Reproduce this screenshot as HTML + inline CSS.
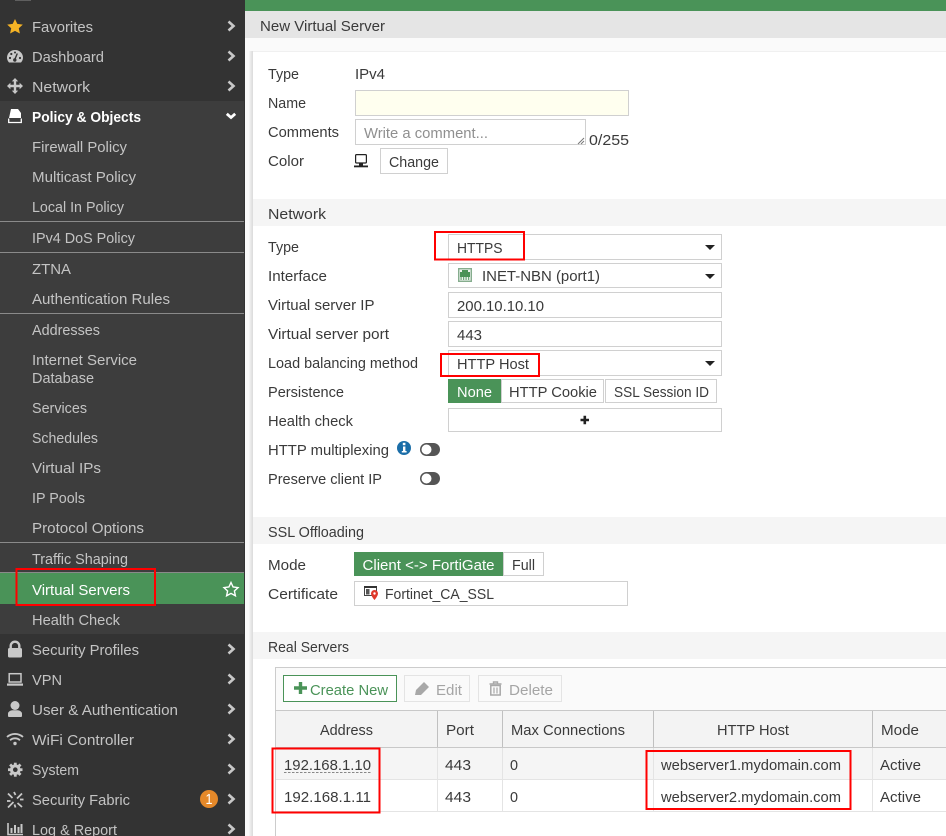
<!DOCTYPE html>
<html><head><meta charset="utf-8"><title>New Virtual Server</title>
<style>
html,body{margin:0;padding:0;width:946px;height:836px;overflow:hidden;background:#fff}
svg{display:block}
text{font-family:"Liberation Sans",sans-serif;font-size:15px;fill:#3a3a3a}
.s{fill:#c4c4c4}
.w{fill:#fff}
.b{font-weight:bold;fill:#fff}
.bx{fill:#fff;stroke:#d0d0d0;stroke-width:1}
.r{fill:none;stroke:#f00;stroke-width:2}
.ch{fill:none;stroke:#c8c8c8;stroke-width:2.6}
.ic{fill:#c8c8c8}
</style></head><body>
<svg xmlns="http://www.w3.org/2000/svg" width="946" height="836" viewBox="0 0 946 836">
<!-- main bg -->
<rect x="245" y="0" width="701" height="836" fill="#fafafa"/>
<rect x="245" y="0" width="701" height="11" fill="#4a9358"/>
<rect x="245" y="11" width="701" height="27" fill="#e5e5e5"/>
<text x="260" y="31" textLength="125" lengthAdjust="spacingAndGlyphs">New Virtual Server</text>
<rect x="249" y="51" width="697" height="1" fill="#f0f0f0"/>
<rect x="249" y="51" width="1" height="785" fill="#f3f3f3"/>
<rect x="250" y="51" width="1" height="785" fill="#ebebeb"/>
<rect x="251" y="51" width="1" height="785" fill="#e4e4e4"/>
<rect x="252" y="51" width="1" height="785" fill="#dedede"/>
<rect x="253" y="52" width="693" height="784" fill="#fff"/>

<!-- sidebar -->
<rect x="0" y="0" width="245" height="836" fill="#333"/>
<rect x="0" y="101" width="244" height="533" fill="#3d3d3d"/>
<rect x="0" y="573" width="244" height="31" fill="#4a9358"/>
<g fill="#8a8a8a">
<rect x="0" y="221" width="244" height="1"/><rect x="0" y="252" width="244" height="1"/>
<rect x="0" y="313" width="244" height="1"/><rect x="0" y="542" width="244" height="1"/>
<rect x="0" y="572" width="244" height="1"/>
</g>
<rect x="15" y="0" width="16" height="1" fill="#5f5f5f"/>
<text class="s" x="32" y="32" textLength="61" lengthAdjust="spacingAndGlyphs">Favorites</text>
<text class="s" x="32" y="62" textLength="72" lengthAdjust="spacingAndGlyphs">Dashboard</text>
<text class="s" x="32" y="92" textLength="58" lengthAdjust="spacingAndGlyphs">Network</text>
<text class="b" x="32" y="122" textLength="109" lengthAdjust="spacingAndGlyphs">Policy &amp; Objects</text>
<text class="s" x="32" y="152" textLength="95" lengthAdjust="spacingAndGlyphs">Firewall Policy</text>
<text class="s" x="32" y="182" textLength="104" lengthAdjust="spacingAndGlyphs">Multicast Policy</text>
<text class="s" x="32" y="212" textLength="92" lengthAdjust="spacingAndGlyphs">Local In Policy</text>
<text class="s" x="32" y="243" textLength="103" lengthAdjust="spacingAndGlyphs">IPv4 DoS Policy</text>
<text class="s" x="32" y="274" textLength="39" lengthAdjust="spacingAndGlyphs">ZTNA</text>
<text class="s" x="32" y="304" textLength="138" lengthAdjust="spacingAndGlyphs">Authentication Rules</text>
<text class="s" x="32" y="335" textLength="68" lengthAdjust="spacingAndGlyphs">Addresses</text>
<text class="s" x="32" y="365" textLength="105" lengthAdjust="spacingAndGlyphs">Internet Service</text>
<text class="s" x="32" y="383" textLength="62" lengthAdjust="spacingAndGlyphs">Database</text>
<text class="s" x="32" y="413" textLength="55" lengthAdjust="spacingAndGlyphs">Services</text>
<text class="s" x="32" y="443" textLength="66" lengthAdjust="spacingAndGlyphs">Schedules</text>
<text class="s" x="32" y="473" textLength="69" lengthAdjust="spacingAndGlyphs">Virtual IPs</text>
<text class="s" x="32" y="503" textLength="53" lengthAdjust="spacingAndGlyphs">IP Pools</text>
<text class="s" x="32" y="533" textLength="112" lengthAdjust="spacingAndGlyphs">Protocol Options</text>
<text class="s" x="32" y="564" textLength="96" lengthAdjust="spacingAndGlyphs">Traffic Shaping</text>
<text class="w" x="32" y="595" textLength="98" lengthAdjust="spacingAndGlyphs">Virtual Servers</text>
<text class="s" x="32" y="625" textLength="88" lengthAdjust="spacingAndGlyphs">Health Check</text>
<text class="s" x="32" y="655" textLength="107" lengthAdjust="spacingAndGlyphs">Security Profiles</text>
<text class="s" x="32" y="685" textLength="30" lengthAdjust="spacingAndGlyphs">VPN</text>
<text class="s" x="32" y="715" textLength="146" lengthAdjust="spacingAndGlyphs">User &amp; Authentication</text>
<text class="s" x="32" y="745" textLength="102" lengthAdjust="spacingAndGlyphs">WiFi Controller</text>
<text class="s" x="32" y="775" textLength="47" lengthAdjust="spacingAndGlyphs">System</text>
<text class="s" x="32" y="805" textLength="98" lengthAdjust="spacingAndGlyphs">Security Fabric</text>
<text class="s" x="32" y="835" textLength="85" lengthAdjust="spacingAndGlyphs">Log &amp; Report</text>

<!-- chevrons -->
<g class="ch">
<path d="M228.500 21.500l5 4.500-5 4.500"/><path d="M228.500 51.500l5 4.500-5 4.500"/><path d="M228.500 81.500l5 4.500-5 4.500"/>
<path d="M228.500 644.500l5 4.500-5 4.500"/><path d="M228.500 674.500l5 4.500-5 4.500"/><path d="M228.500 704.500l5 4.500-5 4.500"/>
<path d="M228.500 734.500l5 4.500-5 4.500"/><path d="M228.500 764.500l5 4.500-5 4.500"/><path d="M228.500 794.500l5 4.500-5 4.500"/><path d="M228.500 824.500l5 4.500-5 4.500"/>
</g>
<path d="M226.800 113.800l4.200 3.700 4.200-3.700" fill="none" stroke="#fff" stroke-width="2.800"/>

<!-- sidebar icons -->
<polygon points="15,19 17.300,23.900 22.800,24.600 18.800,28.300 19.900,33.500 15,30.900 10.100,33.500 11.200,28.300 7.200,24.600 12.700,23.900" fill="#f5b325"/>
<path d="M9 62.500C7.500 61 7 59 7 57.500A8 7.500 0 0 1 23 57.500C23 59 22.500 61 21 62.500z" class="ic"/>
<path d="M14.800 59.500l2.500-6" stroke="#333" stroke-width="1.400"/><circle cx="14.800" cy="60" r="1.700" fill="#333"/>
<g fill="#333"><circle cx="10" cy="58" r="1.100"/><circle cx="11.300" cy="54" r="1.100"/><circle cx="20" cy="58" r="1.100"/><circle cx="15" cy="52.500" r="1"/></g>
<path d="M15 80.500v11M9.500 86h11" stroke="#c8c8c8" stroke-width="2.400"/>
<path d="M15 78l3.200 3.400h-6.400zM15 94l3.200-3.400h-6.400zM7 86l3.400-3.200v6.400zM23 86l-3.400-3.200v6.400z" class="ic"/>
<path d="M11 109h7l3 4v5H9z" fill="#fff"/><path d="M8.700 118.500v4h12.600v-4" fill="none" stroke="#fff" stroke-width="1.300"/>
<path d="M10.700 648v-2a4.300 4.300 0 0 1 8.600 0v2" fill="none" stroke="#c8c8c8" stroke-width="2.400"/><rect x="8" y="648" width="14" height="9.500" rx="1.500" class="ic"/>
<rect x="9.200" y="673.700" width="11.800" height="8.300" fill="none" stroke="#c8c8c8" stroke-width="1.500"/><rect x="7" y="683.500" width="16" height="2.200" class="ic"/>
<circle cx="15" cy="705.500" r="4.500" class="ic"/><path d="M8 716v-2.500a4.500 3.500 0 0 1 4.500-3.200h5a4.500 3.500 0 0 1 4.500 3.200v2.500a1 1 0 0 1-1 1h-12a1 1 0 0 1-1-1z" class="ic"/>
<g fill="none" stroke="#c8c8c8" stroke-width="1.800"><path d="M7 737a12 12 0 0 1 16 0"/><path d="M10 740.200a7.500 7.500 0 0 1 10 0"/></g><circle cx="15" cy="743.500" r="1.700" class="ic"/>
<circle cx="15.300" cy="769.700" r="5.300" class="ic"/>
<g stroke="#c8c8c8" stroke-width="2.800"><path d="M15.300 762.700v3"/><path d="M15.300 773.700v3"/><path d="M8 769.700h3"/><path d="M19.500 769.700h3"/><path d="M10.100 764.500l2 2"/><path d="M18.500 772.900l2 2"/><path d="M20.500 764.500l-2 2"/><path d="M12.100 772.900l-2 2"/></g>
<circle cx="15.300" cy="769.700" r="2.300" fill="#333"/>
<g stroke="#c8c8c8" stroke-width="1.800" fill="none"><path d="M8 793.500l4.500 4.500"/><path d="M17.500 803l4.500 4"/><path d="M22 793.500l-5 5"/><path d="M13.500 802l-5.500 5.500"/><path d="M14 792l1.500 3"/><path d="M7 801h3.500"/><path d="M20 799.500h3.500"/><path d="M14.500 804.500l1 3"/></g>
<path d="M8 823v11.500h15" stroke="#c8c8c8" stroke-width="1.600" fill="none"/><g class="ic"><rect x="10.500" y="828" width="2" height="5"/><rect x="14" y="825" width="2" height="8"/><rect x="17.500" y="827" width="2" height="6"/><rect x="20.500" y="824" width="2" height="9"/></g>
<circle cx="209" cy="799" r="9" fill="#e5892a"/>
<text class="w" x="205.500" y="804" textLength="7" lengthAdjust="spacingAndGlyphs">1</text>
<polygon points="231,582.500 233.100,587 238,587.600 234.400,591 235.400,595.800 231,593.400 226.600,595.800 227.600,591 224,587.600 228.900,587" fill="none" stroke="#fff" stroke-width="1.400"/>

<!-- top form -->
<text x="268" y="79" textLength="31" lengthAdjust="spacingAndGlyphs">Type</text>
<text x="355" y="79" textLength="30" lengthAdjust="spacingAndGlyphs">IPv4</text>
<text x="268" y="108" textLength="38" lengthAdjust="spacingAndGlyphs">Name</text>
<text x="268" y="137" textLength="71" lengthAdjust="spacingAndGlyphs">Comments</text>
<text x="268" y="166" textLength="36" lengthAdjust="spacingAndGlyphs">Color</text>
<rect x="355.500" y="90.500" width="273" height="25" fill="#ffffef" stroke="#d0d0d0"/>
<rect class="bx" x="355.500" y="119.500" width="230" height="25"/>
<text x="364" y="138" textLength="124" lengthAdjust="spacingAndGlyphs" style="fill:#8f8f8f">Write a comment...</text>
<path d="M578 144l6-6M581 144l3-3" stroke="#777" stroke-width="1"/>
<text x="589" y="145" textLength="40" lengthAdjust="spacingAndGlyphs">0/255</text>
<rect x="355.600" y="154.600" width="10.800" height="8.400" rx="1" fill="#fff" stroke="#222" stroke-width="1.200"/><rect x="354" y="165.500" width="14" height="1.800" fill="#222"/><rect x="359" y="163" width="4" height="3" fill="#222"/>
<rect class="bx" x="380.500" y="148.500" width="67" height="25"/>
<text x="389" y="167" textLength="50" lengthAdjust="spacingAndGlyphs">Change</text>

<!-- Network -->
<rect x="253" y="199" width="693" height="27" fill="#f5f5f5"/>
<text x="268" y="219" textLength="58" lengthAdjust="spacingAndGlyphs">Network</text>
<text x="268" y="252" textLength="31" lengthAdjust="spacingAndGlyphs">Type</text>
<text x="268" y="281" textLength="59" lengthAdjust="spacingAndGlyphs">Interface</text>
<text x="268" y="310" textLength="106.500" lengthAdjust="spacingAndGlyphs">Virtual server IP</text>
<text x="268" y="339" textLength="121" lengthAdjust="spacingAndGlyphs">Virtual server port</text>
<text x="268" y="368" textLength="150" lengthAdjust="spacingAndGlyphs">Load balancing method</text>
<text x="268" y="397" textLength="76" lengthAdjust="spacingAndGlyphs">Persistence</text>
<text x="268" y="426" textLength="85" lengthAdjust="spacingAndGlyphs">Health check</text>
<text x="268" y="455" textLength="121" lengthAdjust="spacingAndGlyphs">HTTP multiplexing</text>
<text x="268" y="484" textLength="114" lengthAdjust="spacingAndGlyphs">Preserve client IP</text>

<rect class="bx" x="448.500" y="234.500" width="273" height="25"/>
<rect class="bx" x="448.500" y="263.500" width="273" height="24"/>
<rect class="bx" x="448.500" y="292.500" width="273" height="25"/>
<rect class="bx" x="448.500" y="321.500" width="273" height="25"/>
<rect class="bx" x="448.500" y="350.500" width="273" height="25"/>
<text x="457" y="253" textLength="45.500" lengthAdjust="spacingAndGlyphs">HTTPS</text>
<text x="482" y="281" textLength="118" lengthAdjust="spacingAndGlyphs">INET-NBN (port1)</text>
<text x="457" y="311" textLength="87" lengthAdjust="spacingAndGlyphs">200.10.10.10</text>
<text x="457" y="340" textLength="25" lengthAdjust="spacingAndGlyphs">443</text>
<text x="457" y="369" textLength="72" lengthAdjust="spacingAndGlyphs">HTTP Host</text>
<g fill="#222">
<polygon points="705,245 715,245 710,250"/><polygon points="705,274 715,274 710,279"/><polygon points="705,361 715,361 710,366"/>
<polygon points="611,591 621,591 616,596"/>
</g>
<!-- port icon -->
<rect x="458.700" y="268.700" width="12.600" height="12.600" fill="#eef5ef" stroke="#86ad8e" stroke-width="1.400"/>
<path d="M460 272h2v-2h6v2h2v5h-10z" fill="#4a9358"/>
<g fill="#6fa87c"><rect x="460.500" y="277" width="1.200" height="3"/><rect x="463" y="277" width="1.200" height="3"/><rect x="465.500" y="277" width="1.200" height="3"/><rect x="468" y="277" width="1.200" height="3"/></g>

<rect x="448" y="379" width="53" height="24" fill="#4a9358"/>
<text class="w" x="457" y="397" textLength="35" lengthAdjust="spacingAndGlyphs">None</text>
<rect class="bx" x="501.500" y="379.500" width="102" height="23"/>
<text x="509" y="397" textLength="88" lengthAdjust="spacingAndGlyphs">HTTP Cookie</text>
<rect class="bx" x="605.500" y="379.500" width="111" height="23"/>
<text x="614" y="397" textLength="95" lengthAdjust="spacingAndGlyphs">SSL Session ID</text>
<rect class="bx" x="448.500" y="408.500" width="273" height="23"/>
<path d="M580.500 420h8.500M584.800 415.800v8.400" stroke="#222" stroke-width="2.600"/>

<circle cx="404" cy="448" r="7" fill="#1b6ea8"/>
<rect x="403" y="446.500" width="2.400" height="5" fill="#fff"/><rect x="401.800" y="451" width="4.800" height="1.500" fill="#fff"/><rect x="402.800" y="442.800" width="2.600" height="2.400" fill="#fff"/>
<rect x="420" y="443" width="20" height="13" rx="6.500" fill="#555"/><circle cx="426.500" cy="449.500" r="5" fill="#fff"/>
<rect x="420" y="472" width="20" height="13" rx="6.500" fill="#555"/><circle cx="426.500" cy="478.500" r="5" fill="#fff"/>

<rect class="r" x="435" y="232" width="89" height="27.500"/>
<rect class="r" x="441" y="354" width="98" height="22"/>

<!-- SSL -->
<rect x="253" y="517" width="693" height="27" fill="#f5f5f5"/>
<text x="268" y="537" textLength="96" lengthAdjust="spacingAndGlyphs">SSL Offloading</text>
<text x="268" y="570" textLength="38" lengthAdjust="spacingAndGlyphs">Mode</text>
<text x="268" y="599" textLength="70" lengthAdjust="spacingAndGlyphs">Certificate</text>
<rect x="354" y="552" width="149" height="24" fill="#4a9358"/>
<text class="w" x="362.500" y="570" textLength="132" lengthAdjust="spacingAndGlyphs">Client &lt;-&gt; FortiGate</text>
<rect class="bx" x="503.500" y="552.500" width="40" height="23"/>
<text x="512" y="570" textLength="23" lengthAdjust="spacingAndGlyphs">Full</text>
<rect class="bx" x="354.500" y="581.500" width="273" height="24"/>
<text x="385" y="599" textLength="109" lengthAdjust="spacingAndGlyphs">Fortinet_CA_SSL</text>
<g>
<rect x="364.500" y="586.500" width="12" height="9" fill="#fff" stroke="#444"/>
<rect x="364" y="586" width="13" height="2" fill="#333"/>
<rect x="366" y="589" width="3.500" height="5.500" fill="#555"/>
<path d="M374.500 590a3.500 3.500 0 0 1 3.500 3.500c0 2.500-3.500 6.500-3.500 6.500s-3.500-4-3.500-6.500a3.500 3.500 0 0 1 3.500-3.500z" fill="#e0392b"/><circle cx="374.500" cy="593.500" r="1.200" fill="#fff"/>
</g>

<!-- Real Servers -->
<rect x="253" y="632" width="693" height="27" fill="#f5f5f5"/>
<text x="268" y="652" textLength="81" lengthAdjust="spacingAndGlyphs">Real Servers</text>

<rect x="276" y="668" width="670" height="42" fill="#fafafa"/>
<rect x="276" y="711" width="670" height="36" fill="#f3f3f3"/>
<rect x="276" y="748" width="670" height="31" fill="#f5f5f5"/>
<rect x="275" y="667" width="671" height="1" fill="#ccc"/>
<rect x="275" y="667" width="1" height="169" fill="#ccc"/>
<rect x="275" y="710" width="671" height="1" fill="#c8c8c8"/>
<rect x="275" y="747" width="671" height="1" fill="#c8c8c8"/>
<rect x="276" y="779" width="670" height="1" fill="#e4e4e4"/>
<rect x="276" y="811" width="670" height="1" fill="#e4e4e4"/>
<g fill="#c0c0c0"><rect x="437" y="711" width="1" height="36"/><rect x="502" y="711" width="1" height="36"/><rect x="653" y="711" width="1" height="36"/><rect x="872" y="711" width="1" height="36"/></g>
<g fill="#e4e4e4"><rect x="437" y="748" width="1" height="63"/><rect x="502" y="748" width="1" height="63"/><rect x="653" y="748" width="1" height="63"/><rect x="872" y="748" width="1" height="63"/></g>

<rect x="283.500" y="675.500" width="113" height="26" fill="#fff" stroke="#4a9358"/>
<path d="M294 688h13M300.500 682v12" stroke="#4a9358" stroke-width="3.400"/>
<text x="310" y="695" textLength="78" lengthAdjust="spacingAndGlyphs" style="fill:#4a9358">Create New</text>
<rect x="404.500" y="675.500" width="65" height="26" fill="#fafafa" stroke="#e4e4e4"/>
<path d="M415 695l1-5 8-8 5 5-8 8z" fill="#a8a8a8"/>
<text x="436" y="695" textLength="26" lengthAdjust="spacingAndGlyphs" style="fill:#a5a5a5">Edit</text>
<rect x="478.500" y="675.500" width="83" height="26" fill="#fafafa" stroke="#e4e4e4"/>
<path d="M489.500 684h12M493.500 684v-2h4v2" fill="none" stroke="#a8a8a8" stroke-width="1.400"/><path d="M490.800 685.500h9.400v9.500h-9.400z" fill="none" stroke="#a8a8a8" stroke-width="1.500"/><path d="M494 687.500v6M497 687.500v6" stroke="#a8a8a8" stroke-width="1.200"/>
<text x="509" y="695" textLength="44" lengthAdjust="spacingAndGlyphs" style="fill:#a5a5a5">Delete</text>

<text x="320" y="735" textLength="53" lengthAdjust="spacingAndGlyphs">Address</text>
<text x="446" y="735" textLength="28" lengthAdjust="spacingAndGlyphs">Port</text>
<text x="511" y="735" textLength="114" lengthAdjust="spacingAndGlyphs">Max Connections</text>
<text x="717" y="735" textLength="72" lengthAdjust="spacingAndGlyphs">HTTP Host</text>
<text x="881" y="735" textLength="38" lengthAdjust="spacingAndGlyphs">Mode</text>

<text x="284" y="770" textLength="87" lengthAdjust="spacingAndGlyphs">192.168.1.10</text>
<path d="M284 772.500h87" stroke="#888" stroke-width="1" stroke-dasharray="2.500 1.500"/>
<text x="445" y="770" textLength="26" lengthAdjust="spacingAndGlyphs">443</text>
<text x="510" y="770" textLength="8" lengthAdjust="spacingAndGlyphs">0</text>
<text x="661" y="770" textLength="180" lengthAdjust="spacingAndGlyphs">webserver1.mydomain.com</text>
<text x="880" y="770" textLength="41" lengthAdjust="spacingAndGlyphs">Active</text>
<text x="284" y="802" textLength="87" lengthAdjust="spacingAndGlyphs">192.168.1.11</text>
<text x="445" y="802" textLength="26" lengthAdjust="spacingAndGlyphs">443</text>
<text x="510" y="802" textLength="8" lengthAdjust="spacingAndGlyphs">0</text>
<text x="661" y="802" textLength="180" lengthAdjust="spacingAndGlyphs">webserver2.mydomain.com</text>
<text x="880" y="802" textLength="41" lengthAdjust="spacingAndGlyphs">Active</text>

<rect class="r" x="272.500" y="748.500" width="107" height="64"/>
<rect class="r" x="646.500" y="751" width="204" height="58"/>
<rect class="r" x="16.500" y="569" width="138.500" height="36"/>
</svg>
</body></html>
